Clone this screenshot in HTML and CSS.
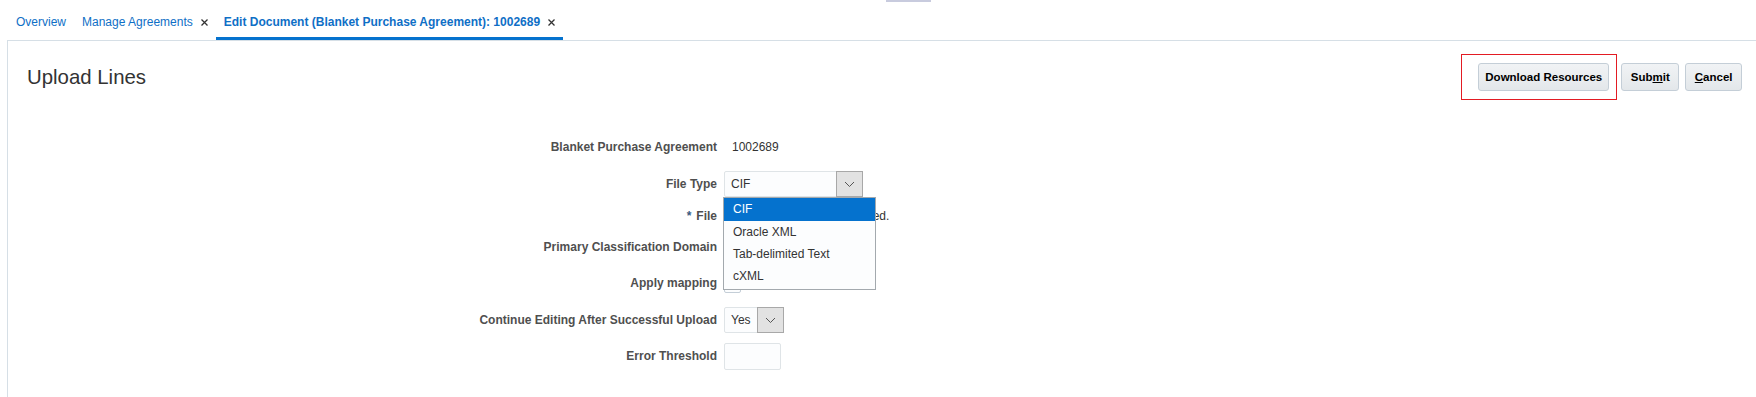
FILE: index.html
```html
<!DOCTYPE html>
<html lang="en">
<head>
    <meta charset="UTF-8">
    <meta name="viewport" content="width=device-width, initial-scale=1.0">
    <title>Upload Lines</title>
    <link rel="stylesheet" href="styles.css">
</head>
<body>
    <div class="grip"></div>
    <nav class="tabs">
        <a class="tab">Overview</a>
        <a class="tab">Manage Agreements
            <svg class="close" width="7" height="7" viewBox="0 0 7 7"><path d="M0.5 0.5 L6.5 6.5 M6.5 0.5 L0.5 6.5"/></svg>
        </a>
        <a class="tab active">Edit Document (Blanket Purchase Agreement): 1002689
            <svg class="close" width="7" height="7" viewBox="0 0 7 7"><path d="M0.5 0.5 L6.5 6.5 M6.5 0.5 L0.5 6.5"/></svg>
        </a>
    </nav>

    <div class="panel">
        <div class="panel-header">
            <h1>Upload Lines</h1>
            <div class="actions">
                <span class="highlight"><button class="btn btn-wide">Download Resources</button></span>
                <button class="btn">Sub<u>m</u>it</button>
                <button class="btn"><u>C</u>ancel</button>
            </div>
        </div>

        <div class="form">
            <label>Blanket Purchase Agreement</label>
            <div class="field"><span class="value">1002689</span></div>

            <label>File Type</label>
            <div class="field">
                <div class="select select-type">
                    <span class="select-text">CIF</span>
                    <span class="select-btn"><svg width="11" height="7" viewBox="0 0 11 7"><path d="M1 1 L5.5 5.5 L10 1"/></svg></span>
                    <ul class="menu">
                        <li class="selected">CIF</li>
                        <li>Oracle XML</li>
                        <li>Tab-delimited Text</li>
                        <li>cXML</li>
                    </ul>
                </div>
            </div>

            <label><span class="req">*</span> File</label>
            <div class="field">
                <span class="browse">Browse...</span>
                <span class="value">No file selected.</span>
            </div>

            <label>Primary Classification Domain</label>
            <div class="field"></div>

            <label>Apply mapping</label>
            <div class="field"><span class="checkbox"></span></div>

            <label>Continue Editing After Successful Upload</label>
            <div class="field">
                <div class="select select-yes">
                    <span class="select-text">Yes</span>
                    <span class="select-btn"><svg width="11" height="7" viewBox="0 0 11 7"><path d="M1 1 L5.5 5.5 L10 1"/></svg></span>
                </div>
            </div>

            <label>Error Threshold</label>
            <div class="field"><span class="input"></span></div>
        </div>
    </div>
</body>
</html>
```

FILE: styles.css
```css
body{
    margin: 0;
    overflow: hidden;
    background-color: #fff;
    font-family: "Liberation Sans", Arial, sans-serif;
    color: #333;
}
.grip{
    width: 45px;
    height: 2px;
    margin-left: 886px;
    background-color: #c8cbde;
}
.tabs{
    display: flex;
    height: 38px;
    padding-left: 8px;
}
.tab{
    display: flex;
    align-items: center;
    gap: 8px;
    box-sizing: border-box;
    padding: 5px 8px 0 8px;
    border-bottom: 3px solid transparent;
    font-size: 12px;
    color: #0f6fc6;
    white-space: nowrap;
}
.tab.active{
    font-weight: bold;
    border-bottom-color: #0572ce;
}
.close{
    stroke: #333;
    stroke-width: 1.3;
    fill: none;
}
.panel{
    margin-left: 7px;
    height: 400px;
    border-top: 1px solid #d6dfe6;
    border-left: 1px solid #d6dfe6;
}
.panel-header{
    display: flex;
    justify-content: space-between;
    align-items: center;
    padding: 13px 14px 0 19px;
}
.panel-header h1{
    margin: 0;
    font-size: 20.4px;
    font-weight: normal;
    color: #333;
}
.actions{
    display: flex;
    align-items: center;
    gap: 6px;
}
.highlight{
    display: flex;
    padding: 8px 7px 8px 16px;
    border: 1px solid #e31b23;
    margin-right: -2px;
}
.btn{
    height: 28px;
    padding: 0 8.5px;
    border: 1px solid #c4ced7;
    border-radius: 3px;
    background: linear-gradient(#f1f3f5, #e3e7ea);
    font-family: "Liberation Sans", Arial, sans-serif;
    font-size: 11.5px;
    font-weight: bold;
    color: #000;
}
.btn-wide{
    padding: 0 6px;
}
.form{
    display: grid;
    grid-template-columns: 709px auto;
    grid-template-rows: 36px 38px 26px 36px 36px 38px 34px;
    column-gap: 7px;
    margin-top: 29px;
    font-size: 12px;
}
.form label{
    display: flex;
    align-items: center;
    justify-content: flex-end;
    font-weight: bold;
    color: #4f4f4f;
}
.req{
    color: #3a5a80;
    margin-right: 5px;
}
.field{
    display: flex;
    align-items: center;
}
.value{
    color: #333;
    padding-left: 8px;
}
.browse{
    width: 72px;
    color: #333;
}
.select{
    position: relative;
    display: flex;
    box-sizing: border-box;
    height: 26px;
    border: 1px solid #dfe4e7;
    border-radius: 2px;
    background-color: #fcfdfe;
}
.select-type{
    width: 139px;
}
.select-yes{
    width: 60px;
}
.select-text{
    flex: 1;
    display: flex;
    align-items: center;
    padding-left: 6px;
    color: #333;
}
.select-btn{
    display: flex;
    align-items: center;
    justify-content: center;
    box-sizing: border-box;
    width: 27px;
    margin: -1px -1px -1px 0;
    border: 1px solid #a8a8a8;
    background-color: #e2e2e2;
}
.select-btn svg{
    stroke: #555;
    stroke-width: 1;
    fill: none;
}
.menu{
    position: absolute;
    top: 25px;
    left: -2px;
    z-index: 2;
    width: 153px;
    box-sizing: border-box;
    margin: 0;
    padding: 0 0 2px 0;
    list-style: none;
    border: 1px solid #a3a9ae;
    background-color: #fcfdfe;
}
.menu li{
    height: 22px;
    line-height: 22px;
    padding-left: 9px;
    color: #333;
}
.menu li.selected{
    height: 23px;
    line-height: 23px;
    background-color: #0572ce;
    color: #fff;
}
.checkbox{
    width: 15px;
    height: 15px;
    border: 1px solid #c4ced7;
    border-radius: 2px;
    background-color: #fcfdfe;
    margin-top: 2px;
}
.input{
    box-sizing: border-box;
    width: 57px;
    height: 27px;
    border: 1px solid #dfe4e7;
    border-radius: 2px;
    background-color: #fcfdfe;
}
```
